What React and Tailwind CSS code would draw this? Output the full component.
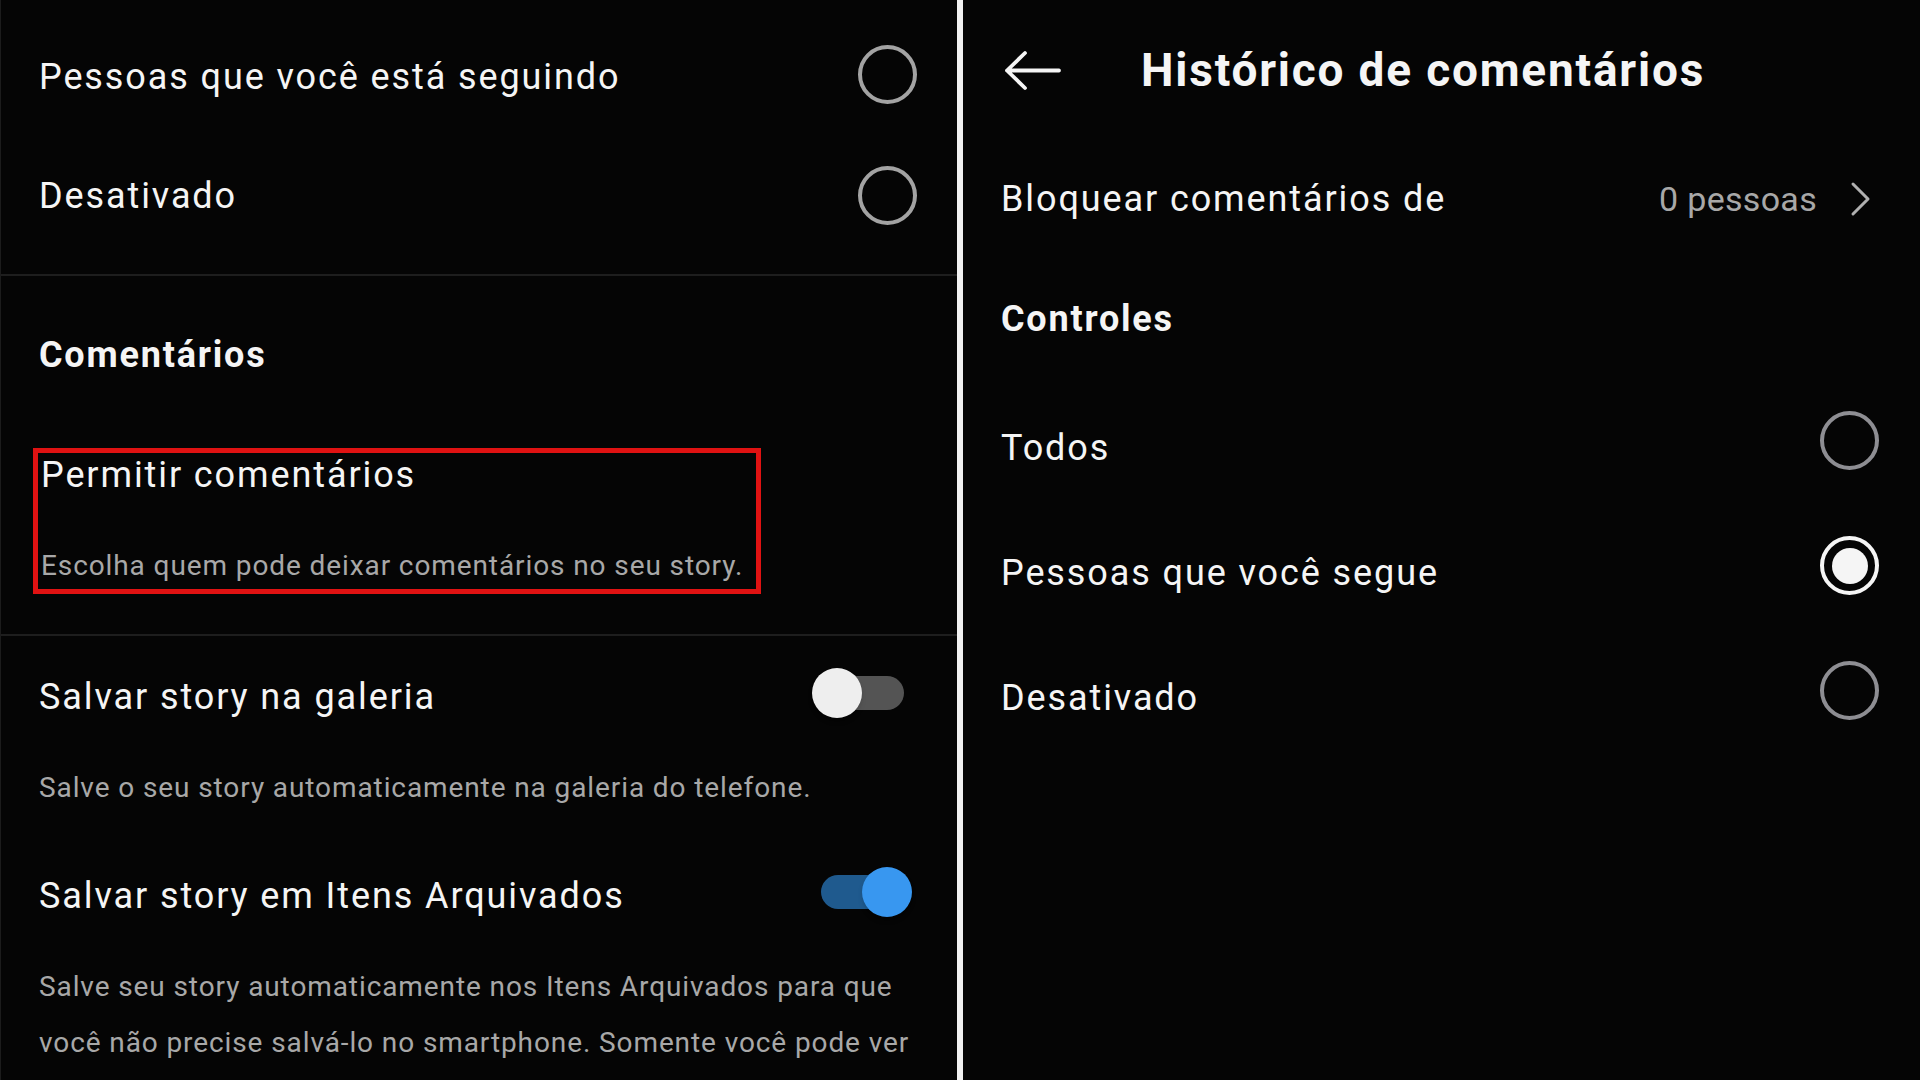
import React from "react";

const Radio = ({ checked, light }) => (
  <div
    className={
      "w-[59px] h-[59px] rounded-full border-[4.5px] flex items-center justify-center shrink-0 " +
      (checked ? "border-[#f5f5f5]" : light ? "border-[#a3a3a3]" : "border-[#8e8e93]")
    }
  >
    {checked && <div className="w-[36px] h-[36px] rounded-full bg-[#f5f5f5]" />}
  </div>
);

const Toggle = ({ on }) => (
  <div className="relative w-[100px] h-[50px] shrink-0">
    <div
      className={
        "absolute left-[9px] top-[8px] w-[83px] h-[34px] rounded-full " +
        (on ? "bg-[#1f5a8e]" : "bg-[#545454]")
      }
    />
    <div
      className={
        "absolute top-0 w-[50px] h-[50px] rounded-full shadow-md " +
        (on ? "left-[50px] bg-[#3897f0]" : "left-0 bg-[#eeeeee]")
      }
    />
  </div>
);

const LeftPanel = () => (
  <div className="w-[957px] h-full bg-[#050505] border-l border-[#1c1c1c] flex flex-col">
    {/* visibility options */}
    <div className="h-[154px] flex items-center justify-between pl-[38px] pr-[40px]">
      <span className="text-[36px] leading-[44px] tracking-[1.9px] text-[#f5f5f5]">Pessoas que você está seguindo</span>
      <div className="-mt-[6px]">
        <Radio light />
      </div>
    </div>
    <div className="h-[84px] flex items-center justify-between pl-[38px] pr-[40px]">
      <span className="text-[36px] leading-[44px] tracking-[1.9px] text-[#f5f5f5]">Desativado</span>
      <div className="-mt-[2px]">
        <Radio light />
      </div>
    </div>
    <div className="h-[36px]" />
    <div className="h-[2px] bg-[#1e1e1e]" />

    {/* Comentários */}
    <div className="h-[157px] flex items-center pl-[38px]">
      <span className="text-[36px] leading-[44px] tracking-[1.8px] font-bold text-[#f5f5f5]">Comentários</span>
    </div>
    <div className="pl-[32px] mt-[15px]">
      <div className="w-[728px] border-[5px] border-[#e01212] pl-[3px] pb-[3px]">
        <div className="text-[36px] leading-[44px] tracking-[1.9px] text-[#f5f5f5]">Permitir comentários</div>
        <div className="mt-[49px] text-[28px] leading-[40px] tracking-[0.9px] text-[#a8a8a8] whitespace-nowrap">
          Escolha quem pode deixar comentários no seu story.
        </div>
      </div>
    </div>
    <div className="h-[40px]" />
    <div className="h-[2px] bg-[#1e1e1e]" />

    {/* Salvar story */}
    <div className="pl-[38px] pr-[37px] pt-[39px]">
      <div className="h-[44px] flex items-center justify-between">
        <span className="text-[36px] leading-[44px] tracking-[1.9px] text-[#f5f5f5]">Salvar story na galeria</span>
        <div className="mr-[8px] -mt-[8px]">
          <Toggle />
        </div>
      </div>
      <div className="mt-[49px] text-[28px] leading-[40px] tracking-[0.9px] text-[#a8a8a8] whitespace-nowrap">
        Salve o seu story automaticamente na galeria do telefone.
      </div>
      <div className="mt-[66px] h-[44px] flex items-center justify-between">
        <span className="text-[36px] leading-[44px] tracking-[1.9px] text-[#f5f5f5]">Salvar story em Itens Arquivados</span>
        <div className="mr-[8px] -mt-[8px]">
          <Toggle on />
        </div>
      </div>
      <div className="mt-[41px] text-[28px] leading-[56px] tracking-[0.9px] text-[#a8a8a8] whitespace-nowrap">
        Salve seu story automaticamente nos Itens Arquivados para que
        <br />
        você não precise salvá-lo no smartphone. Somente você pode ver
      </div>
    </div>
  </div>
);

const RightPanel = () => (
  <div className="flex-1 h-full bg-[#050505] flex flex-col">
    {/* header */}
    <div className="h-[140px] flex items-center pl-[40px]">
      <svg width="60" height="44" viewBox="0 0 60 44" fill="none" className="shrink-0">
        <path
          d="M56 22.5H4M22 5L4 22.5L22 40"
          stroke="#f5f5f5"
          strokeWidth="3.8"
          strokeLinecap="round"
          strokeLinejoin="round"
        />
      </svg>
      <span className="ml-[78px] text-[46px] leading-[56px] tracking-[1.8px] font-bold text-[#f5f5f5] whitespace-nowrap">
        Histórico de comentários
      </span>
    </div>

    <div className="h-[118px] flex items-center justify-between pl-[38px] pr-[47px]">
      <span className="text-[36px] leading-[44px] tracking-[1.9px] text-[#f5f5f5]">Bloquear comentários de</span>
      <div className="flex items-center">
        <span className="text-[34px] leading-[44px] tracking-[0.3px] text-[#a8a8a8]">0 pessoas</span>
        <svg width="24" height="40" viewBox="0 0 24 40" fill="none" className="ml-[32px]">
          <path
            d="M4 5L19 20L4 35"
            stroke="#b0b0b0"
            strokeWidth="3"
            strokeLinecap="round"
            strokeLinejoin="round"
          />
        </svg>
      </div>
    </div>

    <div className="h-[122px] flex items-center pl-[38px]">
      <span className="text-[36px] leading-[44px] tracking-[1.8px] font-bold text-[#f5f5f5]">Controles</span>
    </div>

    <div className="mt-[5px]">
      {[
        { label: "Todos", checked: false },
        { label: "Pessoas que você segue", checked: true },
        { label: "Desativado", checked: false },
      ].map((opt) => (
        <div key={opt.label} className="h-[125px] flex items-center justify-between pl-[38px] pr-[41px]">
          <span className="text-[36px] leading-[44px] tracking-[1.9px] text-[#f5f5f5]">{opt.label}</span>
          <div className="-mt-[14px]">
            <Radio checked={opt.checked} />
          </div>
        </div>
      ))}
    </div>
  </div>
);

export default function App() {
  return (
    <div className="w-[1920px] h-[1080px] overflow-hidden bg-black flex font-['Roboto',sans-serif]">
      <LeftPanel />
      <div className="w-[6px] h-full bg-[#f2f2f2] shrink-0" />
      <RightPanel />
    </div>
  );
}
